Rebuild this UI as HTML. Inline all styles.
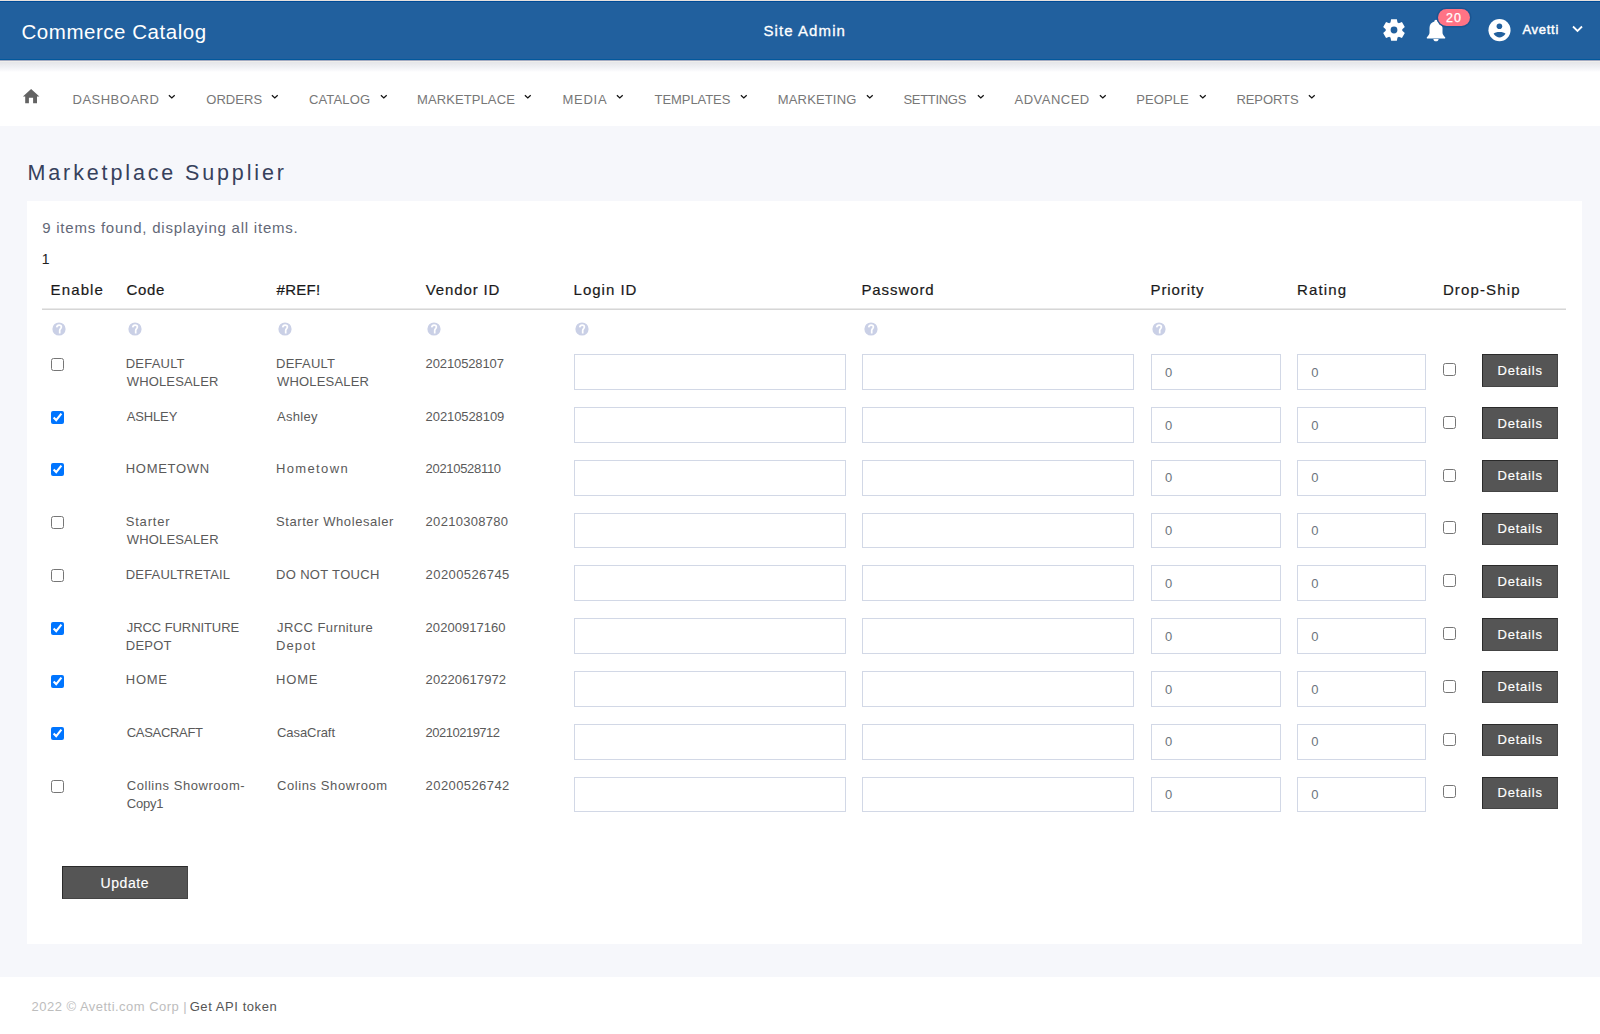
<!DOCTYPE html>
<html><head><meta charset="utf-8"><title>Marketplace Supplier</title>
<style>
html,body{margin:0;padding:0}
body{width:1600px;height:1034px;position:relative;overflow:hidden;background:#f6f7fb;font-family:'Liberation Sans', sans-serif}
.r{position:absolute}
.r svg{display:block}
.t{position:absolute;white-space:pre;line-height:normal;font-family:'Liberation Sans', sans-serif}
.cb{position:absolute;margin:0;width:13px;height:13px}
</style></head><body>
<div class="r" style="left:0;top:0;width:1600px;height:60px;background:#21609e"></div>
<div class="r" style="left:0;top:0;width:1600px;height:1px;background:#e6e1de"></div>
<div class="r" style="left:0;top:1px;width:1600px;height:1px;background:#004b97"></div>
<div class="r" style="left:0;top:59px;width:1600px;height:1px;background:#02589c"></div>
<div class="r" style="left:0;top:60px;width:1600px;height:66px;background:#fff"></div>
<div class="r" style="left:0;top:60px;width:1600px;height:12px;background:linear-gradient(#a3abc2 0,#a3abc2 1px,#efeeeb 1px,#efeeeb 2px,#e5e6e9 2px,#e9eaed 4px,#f0f1f4 7px,#f8f8fa 10px,#fff 12px)"></div>
<div class="r" style="left:27px;top:201px;width:1555px;height:743px;background:#fff"></div>
<div class="r" style="left:42px;top:308px;width:1524px;height:1px;background:#e9e9e9"></div><div class="r" style="left:42px;top:309px;width:1524px;height:1px;background:#d6d6d6"></div>
<div class="r" style="left:61.6px;top:866.3px;width:126.4px;height:32.8px;background:#555;border:1px solid #2a2a2a;border-right-color:#444;border-bottom-color:#444;box-sizing:border-box"></div>
<div class="r" style="left:0;top:976.5px;width:1600px;height:58px;background:#fff"></div>

<div class="r" style="left:1381.7px;top:18.4px;width:24px;height:24px"><svg width="24" height="24" viewBox="0 0 24 24"><path fill="#fff" fill-rule="evenodd" d="M15.49 4.47L14.87 1.17L9.13 1.17L8.51 4.47A8.3 8.3 0 0 0 7.22 5.21L4.06 4.10L1.19 9.07L3.73 11.26A8.3 8.3 0 0 0 3.73 12.74L1.19 14.93L4.06 19.90L7.22 18.79A8.3 8.3 0 0 0 8.51 19.53L9.13 22.83L14.87 22.83L15.49 19.53A8.3 8.3 0 0 0 16.78 18.79L19.94 19.90L22.81 14.93L20.27 12.74A8.3 8.3 0 0 0 20.27 11.26L22.81 9.07L19.94 4.10L16.78 5.21A8.3 8.3 0 0 0 15.49 4.47ZM15.4 12A3.4 3.4 0 1 0 8.6 12A3.4 3.4 0 1 0 15.4 12Z"/></svg></div>
<div class="r" style="left:1426px;top:19px;width:20px;height:23px"><svg width="20" height="23" viewBox="0 0 20 23"><path fill="#fff" d="M10 0.8c1 0 1.6.8 1.6 1.6 3.2.7 4.9 3.4 4.9 6.6v4.4c0 1.5.9 3 2.6 4.8.4.5.1 1.4-.7 1.4H1.6c-.8 0-1.1-.9-.7-1.4 1.7-1.8 2.6-3.3 2.6-4.8V9c0-3.2 1.7-5.9 4.9-6.6 0-.8.6-1.6 1.6-1.6zM7.4 20h5.2c0 1.4-1.1 2.3-2.6 2.3S7.4 21.4 7.4 20z"/></svg></div>
<div class="r" style="left:1438px;top:9px;width:32px;height:17px;border-radius:8.5px;background:#ff7385;box-shadow:0 0 0 1.5px #1b5591"></div>
<div class="r" style="left:1488px;top:19px;width:23px;height:23px"><svg width="23" height="23" viewBox="0 0 23 23"><circle cx="11.5" cy="11.15" r="11.05" fill="#fff"/><circle cx="11.4" cy="7.2" r="2.8" fill="#21609e"/><path fill="#21609e" d="M5.6 14.7C7.2 12.3 15.8 12.3 17.5 14.7C15.5 17.2 13.5 18.5 11.5 18.5C9.5 18.5 7.5 17.2 5.6 14.7Z"/></svg></div>
<div class="r" style="left:1572px;top:25px;width:11px;height:8px"><svg width="11" height="8" viewBox="0 0 11 8"><path d="M1 1.5 L5.5 6 L10 1.5" stroke="#fff" stroke-width="1.8" fill="none"/></svg></div>
<div class="r" style="left:22px;top:88px;width:18px;height:16px"><svg width="18" height="16" viewBox="0 0 18 16"><path fill="#636363" d="M9.1 1 L17.4 8.6 L15 8.6 L15 15.3 L11.1 15.3 L11.1 9.7 L6.9 9.7 L6.9 15.3 L3.2 15.3 L3.2 8.6 L0.9 8.6 Z"/></svg></div>

<div class="r" style="left:574px;top:354.2px;width:271.7px;height:35.8px;border:1px solid #d2d8e6;background:#fff;box-sizing:border-box"></div><div class="r" style="left:862px;top:354.2px;width:271.7px;height:35.8px;border:1px solid #d2d8e6;background:#fff;box-sizing:border-box"></div><div class="r" style="left:1151px;top:354.2px;width:129.8px;height:35.8px;border:1px solid #d2d8e6;background:#fff;box-sizing:border-box"></div><div class="r" style="left:1297.3px;top:354.2px;width:128.7px;height:35.8px;border:1px solid #d2d8e6;background:#fff;box-sizing:border-box"></div><div class="r" style="left:1482px;top:354.2px;width:75.7px;height:32.4px;background:#555;border:1px solid #2a2a2a;border-right-color:#444;border-bottom-color:#444;box-sizing:border-box"></div><input type="checkbox" class="cb" style="left:51px;top:358px"><input type="checkbox" class="cb" style="left:1443px;top:363px"><div class="r" style="left:574px;top:406.99px;width:271.7px;height:35.8px;border:1px solid #d2d8e6;background:#fff;box-sizing:border-box"></div><div class="r" style="left:862px;top:406.99px;width:271.7px;height:35.8px;border:1px solid #d2d8e6;background:#fff;box-sizing:border-box"></div><div class="r" style="left:1151px;top:406.99px;width:129.8px;height:35.8px;border:1px solid #d2d8e6;background:#fff;box-sizing:border-box"></div><div class="r" style="left:1297.3px;top:406.99px;width:128.7px;height:35.8px;border:1px solid #d2d8e6;background:#fff;box-sizing:border-box"></div><div class="r" style="left:1482px;top:406.99px;width:75.7px;height:32.4px;background:#555;border:1px solid #2a2a2a;border-right-color:#444;border-bottom-color:#444;box-sizing:border-box"></div><input type="checkbox" checked class="cb" style="left:51px;top:411px"><input type="checkbox" class="cb" style="left:1443px;top:416px"><div class="r" style="left:574px;top:459.78px;width:271.7px;height:35.8px;border:1px solid #d2d8e6;background:#fff;box-sizing:border-box"></div><div class="r" style="left:862px;top:459.78px;width:271.7px;height:35.8px;border:1px solid #d2d8e6;background:#fff;box-sizing:border-box"></div><div class="r" style="left:1151px;top:459.78px;width:129.8px;height:35.8px;border:1px solid #d2d8e6;background:#fff;box-sizing:border-box"></div><div class="r" style="left:1297.3px;top:459.78px;width:128.7px;height:35.8px;border:1px solid #d2d8e6;background:#fff;box-sizing:border-box"></div><div class="r" style="left:1482px;top:459.78px;width:75.7px;height:32.4px;background:#555;border:1px solid #2a2a2a;border-right-color:#444;border-bottom-color:#444;box-sizing:border-box"></div><input type="checkbox" checked class="cb" style="left:51px;top:463px"><input type="checkbox" class="cb" style="left:1443px;top:469px"><div class="r" style="left:574px;top:512.57px;width:271.7px;height:35.8px;border:1px solid #d2d8e6;background:#fff;box-sizing:border-box"></div><div class="r" style="left:862px;top:512.57px;width:271.7px;height:35.8px;border:1px solid #d2d8e6;background:#fff;box-sizing:border-box"></div><div class="r" style="left:1151px;top:512.57px;width:129.8px;height:35.8px;border:1px solid #d2d8e6;background:#fff;box-sizing:border-box"></div><div class="r" style="left:1297.3px;top:512.57px;width:128.7px;height:35.8px;border:1px solid #d2d8e6;background:#fff;box-sizing:border-box"></div><div class="r" style="left:1482px;top:512.57px;width:75.7px;height:32.4px;background:#555;border:1px solid #2a2a2a;border-right-color:#444;border-bottom-color:#444;box-sizing:border-box"></div><input type="checkbox" class="cb" style="left:51px;top:516px"><input type="checkbox" class="cb" style="left:1443px;top:521px"><div class="r" style="left:574px;top:565.36px;width:271.7px;height:35.8px;border:1px solid #d2d8e6;background:#fff;box-sizing:border-box"></div><div class="r" style="left:862px;top:565.36px;width:271.7px;height:35.8px;border:1px solid #d2d8e6;background:#fff;box-sizing:border-box"></div><div class="r" style="left:1151px;top:565.36px;width:129.8px;height:35.8px;border:1px solid #d2d8e6;background:#fff;box-sizing:border-box"></div><div class="r" style="left:1297.3px;top:565.36px;width:128.7px;height:35.8px;border:1px solid #d2d8e6;background:#fff;box-sizing:border-box"></div><div class="r" style="left:1482px;top:565.36px;width:75.7px;height:32.4px;background:#555;border:1px solid #2a2a2a;border-right-color:#444;border-bottom-color:#444;box-sizing:border-box"></div><input type="checkbox" class="cb" style="left:51px;top:569px"><input type="checkbox" class="cb" style="left:1443px;top:574px"><div class="r" style="left:574px;top:618.15px;width:271.7px;height:35.8px;border:1px solid #d2d8e6;background:#fff;box-sizing:border-box"></div><div class="r" style="left:862px;top:618.15px;width:271.7px;height:35.8px;border:1px solid #d2d8e6;background:#fff;box-sizing:border-box"></div><div class="r" style="left:1151px;top:618.15px;width:129.8px;height:35.8px;border:1px solid #d2d8e6;background:#fff;box-sizing:border-box"></div><div class="r" style="left:1297.3px;top:618.15px;width:128.7px;height:35.8px;border:1px solid #d2d8e6;background:#fff;box-sizing:border-box"></div><div class="r" style="left:1482px;top:618.15px;width:75.7px;height:32.4px;background:#555;border:1px solid #2a2a2a;border-right-color:#444;border-bottom-color:#444;box-sizing:border-box"></div><input type="checkbox" checked class="cb" style="left:51px;top:622px"><input type="checkbox" class="cb" style="left:1443px;top:627px"><div class="r" style="left:574px;top:670.94px;width:271.7px;height:35.8px;border:1px solid #d2d8e6;background:#fff;box-sizing:border-box"></div><div class="r" style="left:862px;top:670.94px;width:271.7px;height:35.8px;border:1px solid #d2d8e6;background:#fff;box-sizing:border-box"></div><div class="r" style="left:1151px;top:670.94px;width:129.8px;height:35.8px;border:1px solid #d2d8e6;background:#fff;box-sizing:border-box"></div><div class="r" style="left:1297.3px;top:670.94px;width:128.7px;height:35.8px;border:1px solid #d2d8e6;background:#fff;box-sizing:border-box"></div><div class="r" style="left:1482px;top:670.94px;width:75.7px;height:32.4px;background:#555;border:1px solid #2a2a2a;border-right-color:#444;border-bottom-color:#444;box-sizing:border-box"></div><input type="checkbox" checked class="cb" style="left:51px;top:675px"><input type="checkbox" class="cb" style="left:1443px;top:680px"><div class="r" style="left:574px;top:723.73px;width:271.7px;height:35.8px;border:1px solid #d2d8e6;background:#fff;box-sizing:border-box"></div><div class="r" style="left:862px;top:723.73px;width:271.7px;height:35.8px;border:1px solid #d2d8e6;background:#fff;box-sizing:border-box"></div><div class="r" style="left:1151px;top:723.73px;width:129.8px;height:35.8px;border:1px solid #d2d8e6;background:#fff;box-sizing:border-box"></div><div class="r" style="left:1297.3px;top:723.73px;width:128.7px;height:35.8px;border:1px solid #d2d8e6;background:#fff;box-sizing:border-box"></div><div class="r" style="left:1482px;top:723.73px;width:75.7px;height:32.4px;background:#555;border:1px solid #2a2a2a;border-right-color:#444;border-bottom-color:#444;box-sizing:border-box"></div><input type="checkbox" checked class="cb" style="left:51px;top:727px"><input type="checkbox" class="cb" style="left:1443px;top:733px"><div class="r" style="left:574px;top:776.52px;width:271.7px;height:35.8px;border:1px solid #d2d8e6;background:#fff;box-sizing:border-box"></div><div class="r" style="left:862px;top:776.52px;width:271.7px;height:35.8px;border:1px solid #d2d8e6;background:#fff;box-sizing:border-box"></div><div class="r" style="left:1151px;top:776.52px;width:129.8px;height:35.8px;border:1px solid #d2d8e6;background:#fff;box-sizing:border-box"></div><div class="r" style="left:1297.3px;top:776.52px;width:128.7px;height:35.8px;border:1px solid #d2d8e6;background:#fff;box-sizing:border-box"></div><div class="r" style="left:1482px;top:776.52px;width:75.7px;height:32.4px;background:#555;border:1px solid #2a2a2a;border-right-color:#444;border-bottom-color:#444;box-sizing:border-box"></div><input type="checkbox" class="cb" style="left:51px;top:780px"><input type="checkbox" class="cb" style="left:1443px;top:785px"><div class="r" style="left:52px;top:321.6px;width:14px;height:14px"><svg width="14" height="14" viewBox="0 0 14 14"><circle cx="7" cy="7" r="6.6" fill="#cad0e6"/><path d="M4.7 5.4C4.9 3.8 5.9 3.1 7.1 3.1C8.5 3.1 9.4 4 9.4 5.1C9.4 6.5 7.7 6.9 7.7 8.4L7.7 11.4" stroke="#fff" stroke-width="1.7" fill="none"/></svg></div><div class="r" style="left:127.6px;top:321.6px;width:14px;height:14px"><svg width="14" height="14" viewBox="0 0 14 14"><circle cx="7" cy="7" r="6.6" fill="#cad0e6"/><path d="M4.7 5.4C4.9 3.8 5.9 3.1 7.1 3.1C8.5 3.1 9.4 4 9.4 5.1C9.4 6.5 7.7 6.9 7.7 8.4L7.7 11.4" stroke="#fff" stroke-width="1.7" fill="none"/></svg></div><div class="r" style="left:278px;top:321.6px;width:14px;height:14px"><svg width="14" height="14" viewBox="0 0 14 14"><circle cx="7" cy="7" r="6.6" fill="#cad0e6"/><path d="M4.7 5.4C4.9 3.8 5.9 3.1 7.1 3.1C8.5 3.1 9.4 4 9.4 5.1C9.4 6.5 7.7 6.9 7.7 8.4L7.7 11.4" stroke="#fff" stroke-width="1.7" fill="none"/></svg></div><div class="r" style="left:426.8px;top:321.6px;width:14px;height:14px"><svg width="14" height="14" viewBox="0 0 14 14"><circle cx="7" cy="7" r="6.6" fill="#cad0e6"/><path d="M4.7 5.4C4.9 3.8 5.9 3.1 7.1 3.1C8.5 3.1 9.4 4 9.4 5.1C9.4 6.5 7.7 6.9 7.7 8.4L7.7 11.4" stroke="#fff" stroke-width="1.7" fill="none"/></svg></div><div class="r" style="left:575.3px;top:321.6px;width:14px;height:14px"><svg width="14" height="14" viewBox="0 0 14 14"><circle cx="7" cy="7" r="6.6" fill="#cad0e6"/><path d="M4.7 5.4C4.9 3.8 5.9 3.1 7.1 3.1C8.5 3.1 9.4 4 9.4 5.1C9.4 6.5 7.7 6.9 7.7 8.4L7.7 11.4" stroke="#fff" stroke-width="1.7" fill="none"/></svg></div><div class="r" style="left:864px;top:321.6px;width:14px;height:14px"><svg width="14" height="14" viewBox="0 0 14 14"><circle cx="7" cy="7" r="6.6" fill="#cad0e6"/><path d="M4.7 5.4C4.9 3.8 5.9 3.1 7.1 3.1C8.5 3.1 9.4 4 9.4 5.1C9.4 6.5 7.7 6.9 7.7 8.4L7.7 11.4" stroke="#fff" stroke-width="1.7" fill="none"/></svg></div><div class="r" style="left:1151.7px;top:321.6px;width:14px;height:14px"><svg width="14" height="14" viewBox="0 0 14 14"><circle cx="7" cy="7" r="6.6" fill="#cad0e6"/><path d="M4.7 5.4C4.9 3.8 5.9 3.1 7.1 3.1C8.5 3.1 9.4 4 9.4 5.1C9.4 6.5 7.7 6.9 7.7 8.4L7.7 11.4" stroke="#fff" stroke-width="1.7" fill="none"/></svg></div><div class="r" style="left:168px;top:94px;width:8px;height:6px"><svg width="8" height="6" viewBox="0 0 8 6"><path d="M0.9 1.3 L3.8 4 L6.7 1.3" stroke="#111" stroke-width="1.25" fill="none"/></svg></div><div class="r" style="left:271.3px;top:94px;width:8px;height:6px"><svg width="8" height="6" viewBox="0 0 8 6"><path d="M0.9 1.3 L3.8 4 L6.7 1.3" stroke="#111" stroke-width="1.25" fill="none"/></svg></div><div class="r" style="left:379.6px;top:94px;width:8px;height:6px"><svg width="8" height="6" viewBox="0 0 8 6"><path d="M0.9 1.3 L3.8 4 L6.7 1.3" stroke="#111" stroke-width="1.25" fill="none"/></svg></div><div class="r" style="left:524.4px;top:94px;width:8px;height:6px"><svg width="8" height="6" viewBox="0 0 8 6"><path d="M0.9 1.3 L3.8 4 L6.7 1.3" stroke="#111" stroke-width="1.25" fill="none"/></svg></div><div class="r" style="left:616.4px;top:94px;width:8px;height:6px"><svg width="8" height="6" viewBox="0 0 8 6"><path d="M0.9 1.3 L3.8 4 L6.7 1.3" stroke="#111" stroke-width="1.25" fill="none"/></svg></div><div class="r" style="left:740px;top:94px;width:8px;height:6px"><svg width="8" height="6" viewBox="0 0 8 6"><path d="M0.9 1.3 L3.8 4 L6.7 1.3" stroke="#111" stroke-width="1.25" fill="none"/></svg></div><div class="r" style="left:866px;top:94px;width:8px;height:6px"><svg width="8" height="6" viewBox="0 0 8 6"><path d="M0.9 1.3 L3.8 4 L6.7 1.3" stroke="#111" stroke-width="1.25" fill="none"/></svg></div><div class="r" style="left:976.5px;top:94px;width:8px;height:6px"><svg width="8" height="6" viewBox="0 0 8 6"><path d="M0.9 1.3 L3.8 4 L6.7 1.3" stroke="#111" stroke-width="1.25" fill="none"/></svg></div><div class="r" style="left:1099px;top:94px;width:8px;height:6px"><svg width="8" height="6" viewBox="0 0 8 6"><path d="M0.9 1.3 L3.8 4 L6.7 1.3" stroke="#111" stroke-width="1.25" fill="none"/></svg></div><div class="r" style="left:1199px;top:94px;width:8px;height:6px"><svg width="8" height="6" viewBox="0 0 8 6"><path d="M0.9 1.3 L3.8 4 L6.7 1.3" stroke="#111" stroke-width="1.25" fill="none"/></svg></div><div class="r" style="left:1308.4px;top:94px;width:8px;height:6px"><svg width="8" height="6" viewBox="0 0 8 6"><path d="M0.9 1.3 L3.8 4 L6.7 1.3" stroke="#111" stroke-width="1.25" fill="none"/></svg></div>
<span class="t" style="left:21.5px;top:20.1px;font-size:20.5px;font-weight:400;letter-spacing:0.533px;color:#fff;">Commerce Catalog</span><span class="t" style="left:763.4px;top:22.0px;font-size:15px;font-weight:400;letter-spacing:1.089px;color:#fff;-webkit-text-stroke:0.3px #fff;">Site Admin</span><span class="t" style="left:1446px;top:10.8px;font-size:12.5px;font-weight:400;letter-spacing:1.0px;color:#fff;-webkit-text-stroke:0.25px #fff;">20</span><span class="t" style="left:1522.4px;top:22.4px;font-size:13px;font-weight:400;letter-spacing:0.72px;color:#fff;-webkit-text-stroke:0.45px #fff;">Avetti</span><span class="t" style="left:72.5px;top:91.75px;font-size:13px;font-weight:400;letter-spacing:0.5px;color:#777;">DASHBOARD</span><span class="t" style="left:206.2px;top:91.75px;font-size:13px;font-weight:400;letter-spacing:0.08px;color:#777;">ORDERS</span><span class="t" style="left:308.9px;top:91.75px;font-size:13px;font-weight:400;letter-spacing:0.167px;color:#777;">CATALOG</span><span class="t" style="left:417px;top:91.75px;font-size:13px;font-weight:400;letter-spacing:0.1px;color:#777;">MARKETPLACE</span><span class="t" style="left:562.4px;top:91.75px;font-size:13px;font-weight:400;letter-spacing:0.75px;color:#777;">MEDIA</span><span class="t" style="left:654.6px;top:91.75px;font-size:13px;font-weight:400;letter-spacing:-0.075px;color:#777;">TEMPLATES</span><span class="t" style="left:777.8px;top:91.75px;font-size:13px;font-weight:400;letter-spacing:0.15px;color:#777;">MARKETING</span><span class="t" style="left:903.4px;top:91.75px;font-size:13px;font-weight:400;letter-spacing:-0.3px;color:#777;">SETTINGS</span><span class="t" style="left:1014.6px;top:91.75px;font-size:13px;font-weight:400;letter-spacing:0.471px;color:#777;">ADVANCED</span><span class="t" style="left:1136.3px;top:91.75px;font-size:13px;font-weight:400;letter-spacing:0.06px;color:#777;">PEOPLE</span><span class="t" style="left:1236.4px;top:91.75px;font-size:13px;font-weight:400;letter-spacing:-0.067px;color:#777;">REPORTS</span><span class="t" style="left:27.5px;top:161px;font-size:21.5px;font-weight:400;letter-spacing:2.868px;color:#36415c;">Marketplace Supplier</span><span class="t" style="left:42.2px;top:218.9px;font-size:15px;font-weight:400;letter-spacing:0.774px;color:#636877;">9 items found, displaying all items.</span><span class="t" style="left:41.75px;top:251.4px;font-size:14px;font-weight:400;letter-spacing:0px;color:#222;">1</span><span class="t" style="left:50.6px;top:281.3px;font-size:15px;font-weight:400;letter-spacing:1.12px;color:#1a1a1a;-webkit-text-stroke:0.2px #1a1a1a;">Enable</span><span class="t" style="left:126.6px;top:281.3px;font-size:15px;font-weight:400;letter-spacing:0.667px;color:#1a1a1a;-webkit-text-stroke:0.2px #1a1a1a;">Code</span><span class="t" style="left:276.6px;top:281.3px;font-size:15px;font-weight:400;letter-spacing:0.275px;color:#1a1a1a;-webkit-text-stroke:0.2px #1a1a1a;">#REF!</span><span class="t" style="left:425.8px;top:281.3px;font-size:15px;font-weight:400;letter-spacing:0.862px;color:#1a1a1a;-webkit-text-stroke:0.2px #1a1a1a;">Vendor ID</span><span class="t" style="left:573.6px;top:281.3px;font-size:15px;font-weight:400;letter-spacing:0.986px;color:#1a1a1a;-webkit-text-stroke:0.2px #1a1a1a;">Login ID</span><span class="t" style="left:861.4px;top:281.3px;font-size:15px;font-weight:400;letter-spacing:0.914px;color:#1a1a1a;-webkit-text-stroke:0.2px #1a1a1a;">Password</span><span class="t" style="left:1150.5px;top:281.3px;font-size:15px;font-weight:400;letter-spacing:0.9px;color:#1a1a1a;-webkit-text-stroke:0.2px #1a1a1a;">Priority</span><span class="t" style="left:1297px;top:281.3px;font-size:15px;font-weight:400;letter-spacing:1.14px;color:#1a1a1a;-webkit-text-stroke:0.2px #1a1a1a;">Rating</span><span class="t" style="left:1442.9px;top:281.3px;font-size:15px;font-weight:400;letter-spacing:1.137px;color:#1a1a1a;-webkit-text-stroke:0.2px #1a1a1a;">Drop-Ship</span><span class="t" style="left:125.75px;top:355.75px;font-size:13px;font-weight:400;letter-spacing:0.208px;color:#5a5a5a;">DEFAULT</span><span class="t" style="left:126.75px;top:374.05px;font-size:13px;font-weight:400;letter-spacing:0.15px;color:#5a5a5a;">WHOLESALER</span><span class="t" style="left:276px;top:355.75px;font-size:13px;font-weight:400;letter-spacing:0.25px;color:#5a5a5a;">DEFAULT</span><span class="t" style="left:277px;top:374.05px;font-size:13px;font-weight:400;letter-spacing:0.178px;color:#5a5a5a;">WHOLESALER</span><span class="t" style="left:425.6px;top:355.75px;font-size:13px;font-weight:400;letter-spacing:-0.12px;color:#5a5a5a;">20210528107</span><span class="t" style="left:1165px;top:364.8px;font-size:13px;font-weight:400;letter-spacing:0px;color:#6c757d;">0</span><span class="t" style="left:1311.3px;top:364.8px;font-size:13px;font-weight:400;letter-spacing:0px;color:#6c757d;">0</span><span class="t" style="left:1497.6px;top:362.75px;font-size:13px;font-weight:400;letter-spacing:0.767px;color:#fff;-webkit-text-stroke:0.15px #fff;">Details</span><span class="t" style="left:126.75px;top:408.54px;font-size:13px;font-weight:400;letter-spacing:-0.15px;color:#5a5a5a;">ASHLEY</span><span class="t" style="left:277px;top:408.54px;font-size:13px;font-weight:400;letter-spacing:0.3px;color:#5a5a5a;">Ashley</span><span class="t" style="left:425.6px;top:408.54px;font-size:13px;font-weight:400;letter-spacing:-0.085px;color:#5a5a5a;">20210528109</span><span class="t" style="left:1165px;top:417.59px;font-size:13px;font-weight:400;letter-spacing:0px;color:#6c757d;">0</span><span class="t" style="left:1311.3px;top:417.59px;font-size:13px;font-weight:400;letter-spacing:0px;color:#6c757d;">0</span><span class="t" style="left:1497.6px;top:415.54px;font-size:13px;font-weight:400;letter-spacing:0.767px;color:#fff;-webkit-text-stroke:0.15px #fff;">Details</span><span class="t" style="left:125.75px;top:461.33px;font-size:13px;font-weight:400;letter-spacing:0.714px;color:#5a5a5a;">HOMETOWN</span><span class="t" style="left:276px;top:461.33px;font-size:13px;font-weight:400;letter-spacing:1.357px;color:#5a5a5a;">Hometown</span><span class="t" style="left:425.6px;top:461.33px;font-size:13px;font-weight:400;letter-spacing:-0.31px;color:#5a5a5a;">20210528110</span><span class="t" style="left:1165px;top:470.38px;font-size:13px;font-weight:400;letter-spacing:0px;color:#6c757d;">0</span><span class="t" style="left:1311.3px;top:470.38px;font-size:13px;font-weight:400;letter-spacing:0px;color:#6c757d;">0</span><span class="t" style="left:1497.6px;top:468.33px;font-size:13px;font-weight:400;letter-spacing:0.767px;color:#fff;-webkit-text-stroke:0.15px #fff;">Details</span><span class="t" style="left:125.75px;top:514.12px;font-size:13px;font-weight:400;letter-spacing:0.792px;color:#5a5a5a;">Starter</span><span class="t" style="left:126.75px;top:532.42px;font-size:13px;font-weight:400;letter-spacing:0.167px;color:#5a5a5a;">WHOLESALER</span><span class="t" style="left:276px;top:514.12px;font-size:13px;font-weight:400;letter-spacing:0.574px;color:#5a5a5a;">Starter Wholesaler</span><span class="t" style="left:425.6px;top:514.12px;font-size:13px;font-weight:400;letter-spacing:0.29px;color:#5a5a5a;">20210308780</span><span class="t" style="left:1165px;top:523.17px;font-size:13px;font-weight:400;letter-spacing:0px;color:#6c757d;">0</span><span class="t" style="left:1311.3px;top:523.17px;font-size:13px;font-weight:400;letter-spacing:0px;color:#6c757d;">0</span><span class="t" style="left:1497.6px;top:521.12px;font-size:13px;font-weight:400;letter-spacing:0.767px;color:#fff;-webkit-text-stroke:0.15px #fff;">Details</span><span class="t" style="left:125.75px;top:566.91px;font-size:13px;font-weight:400;letter-spacing:0.188px;color:#5a5a5a;">DEFAULTRETAIL</span><span class="t" style="left:276px;top:566.91px;font-size:13px;font-weight:400;letter-spacing:0.341px;color:#5a5a5a;">DO NOT TOUCH</span><span class="t" style="left:425.6px;top:566.91px;font-size:13px;font-weight:400;letter-spacing:0.415px;color:#5a5a5a;">20200526745</span><span class="t" style="left:1165px;top:575.96px;font-size:13px;font-weight:400;letter-spacing:0px;color:#6c757d;">0</span><span class="t" style="left:1311.3px;top:575.96px;font-size:13px;font-weight:400;letter-spacing:0px;color:#6c757d;">0</span><span class="t" style="left:1497.6px;top:573.91px;font-size:13px;font-weight:400;letter-spacing:0.767px;color:#fff;-webkit-text-stroke:0.15px #fff;">Details</span><span class="t" style="left:126.75px;top:619.7px;font-size:13px;font-weight:400;letter-spacing:-0.077px;color:#5a5a5a;">JRCC FURNITURE</span><span class="t" style="left:125.75px;top:638.0px;font-size:13px;font-weight:400;letter-spacing:0.25px;color:#5a5a5a;">DEPOT</span><span class="t" style="left:277px;top:619.7px;font-size:13px;font-weight:400;letter-spacing:0.423px;color:#5a5a5a;">JRCC Furniture</span><span class="t" style="left:276px;top:638.0px;font-size:13px;font-weight:400;letter-spacing:1.125px;color:#5a5a5a;">Depot</span><span class="t" style="left:425.6px;top:619.7px;font-size:13px;font-weight:400;letter-spacing:0.04px;color:#5a5a5a;">20200917160</span><span class="t" style="left:1165px;top:628.75px;font-size:13px;font-weight:400;letter-spacing:0px;color:#6c757d;">0</span><span class="t" style="left:1311.3px;top:628.75px;font-size:13px;font-weight:400;letter-spacing:0px;color:#6c757d;">0</span><span class="t" style="left:1497.6px;top:626.7px;font-size:13px;font-weight:400;letter-spacing:0.767px;color:#fff;-webkit-text-stroke:0.15px #fff;">Details</span><span class="t" style="left:125.75px;top:672.49px;font-size:13px;font-weight:400;letter-spacing:0.75px;color:#5a5a5a;">HOME</span><span class="t" style="left:276px;top:672.49px;font-size:13px;font-weight:400;letter-spacing:0.833px;color:#5a5a5a;">HOME</span><span class="t" style="left:425.6px;top:672.49px;font-size:13px;font-weight:400;letter-spacing:0.09px;color:#5a5a5a;">20220617972</span><span class="t" style="left:1165px;top:681.54px;font-size:13px;font-weight:400;letter-spacing:0px;color:#6c757d;">0</span><span class="t" style="left:1311.3px;top:681.54px;font-size:13px;font-weight:400;letter-spacing:0px;color:#6c757d;">0</span><span class="t" style="left:1497.6px;top:679.49px;font-size:13px;font-weight:400;letter-spacing:0.767px;color:#fff;-webkit-text-stroke:0.15px #fff;">Details</span><span class="t" style="left:126.75px;top:725.28px;font-size:13px;font-weight:400;letter-spacing:-0.312px;color:#5a5a5a;">CASACRAFT</span><span class="t" style="left:277px;top:725.28px;font-size:13px;font-weight:400;letter-spacing:-0.062px;color:#5a5a5a;">CasaCraft</span><span class="t" style="left:425.6px;top:725.28px;font-size:13px;font-weight:400;letter-spacing:-0.51px;color:#5a5a5a;">20210219712</span><span class="t" style="left:1165px;top:734.33px;font-size:13px;font-weight:400;letter-spacing:0px;color:#6c757d;">0</span><span class="t" style="left:1311.3px;top:734.33px;font-size:13px;font-weight:400;letter-spacing:0px;color:#6c757d;">0</span><span class="t" style="left:1497.6px;top:732.28px;font-size:13px;font-weight:400;letter-spacing:0.767px;color:#fff;-webkit-text-stroke:0.15px #fff;">Details</span><span class="t" style="left:126.75px;top:778.07px;font-size:13px;font-weight:400;letter-spacing:0.547px;color:#5a5a5a;">Collins Showroom-</span><span class="t" style="left:126.75px;top:796.37px;font-size:13px;font-weight:400;letter-spacing:-0.188px;color:#5a5a5a;">Copy1</span><span class="t" style="left:277px;top:778.07px;font-size:13px;font-weight:400;letter-spacing:0.589px;color:#5a5a5a;">Colins Showroom</span><span class="t" style="left:425.6px;top:778.07px;font-size:13px;font-weight:400;letter-spacing:0.415px;color:#5a5a5a;">20200526742</span><span class="t" style="left:1165px;top:787.12px;font-size:13px;font-weight:400;letter-spacing:0px;color:#6c757d;">0</span><span class="t" style="left:1311.3px;top:787.12px;font-size:13px;font-weight:400;letter-spacing:0px;color:#6c757d;">0</span><span class="t" style="left:1497.6px;top:785.07px;font-size:13px;font-weight:400;letter-spacing:0.767px;color:#fff;-webkit-text-stroke:0.15px #fff;">Details</span><span class="t" style="left:100.6px;top:875.4px;font-size:14px;font-weight:400;letter-spacing:0.56px;color:#fff;-webkit-text-stroke:0.15px #fff;">Update</span><span class="t" style="left:31.6px;top:999.25px;font-size:13px;font-weight:400;letter-spacing:0.474px;color:#bdbdbd;">2022 © Avetti.com Corp |</span><span class="t" style="left:189.7px;top:999.25px;font-size:13px;font-weight:400;letter-spacing:0.567px;color:#555;">Get API token</span>
</body></html>
